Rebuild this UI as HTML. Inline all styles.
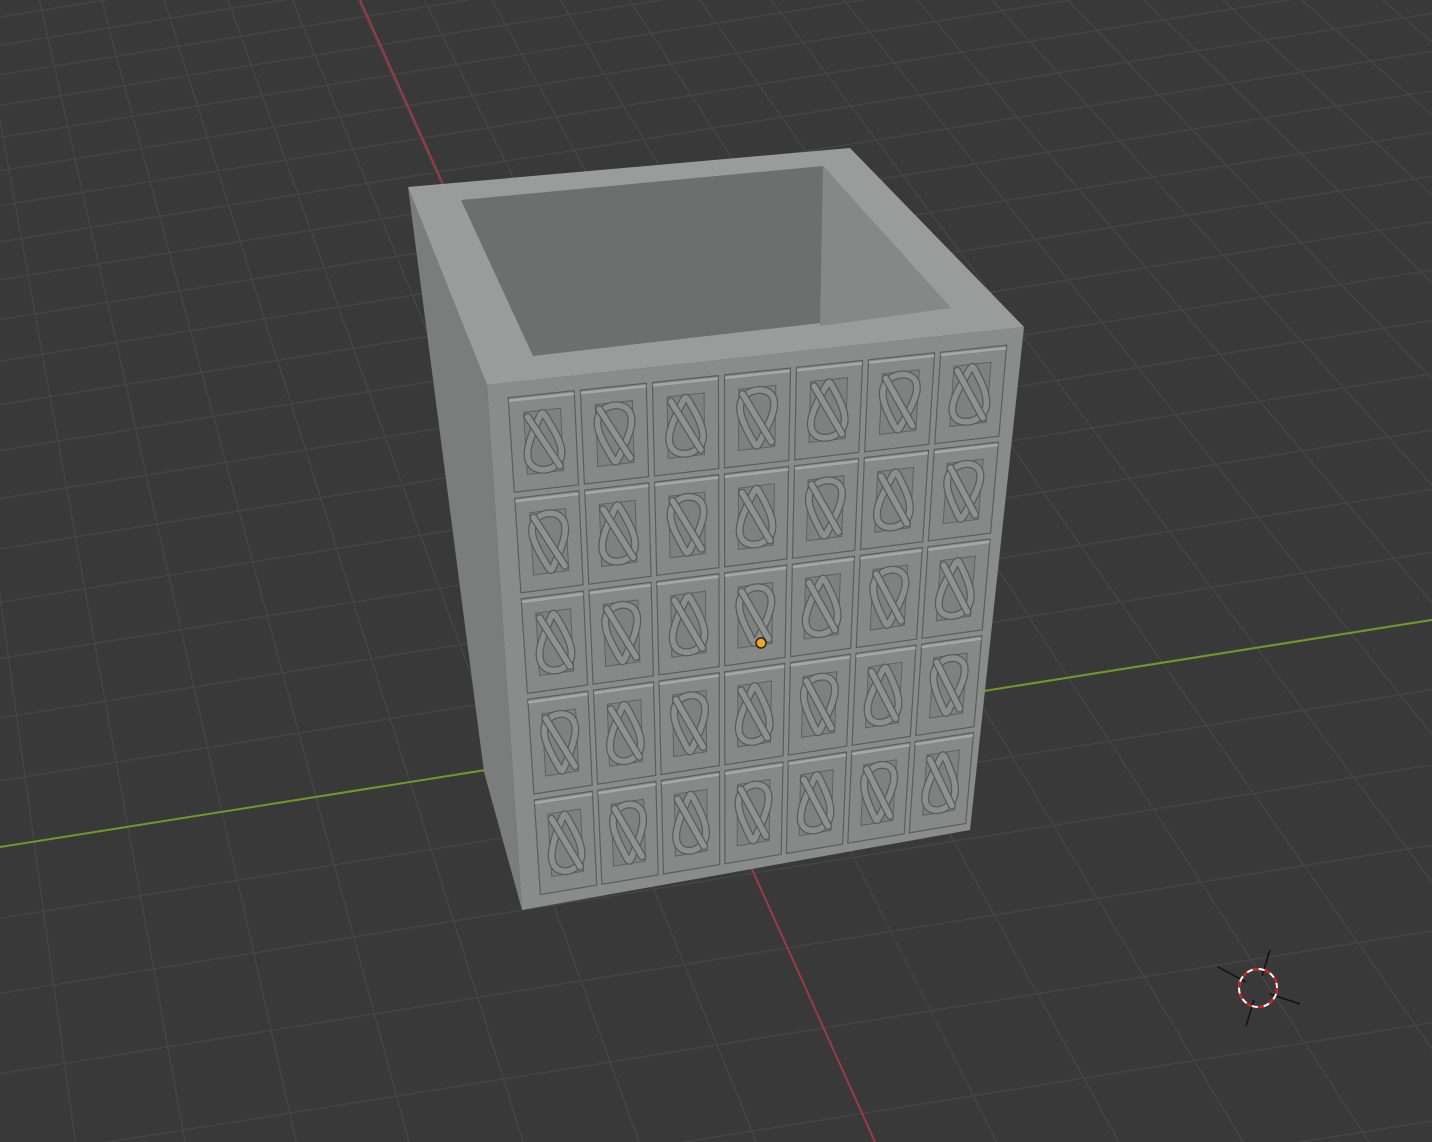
<!DOCTYPE html>
<html><head><meta charset="utf-8"><style>
html,body{margin:0;padding:0;background:#393939;overflow:hidden;width:1432px;height:1142px}
svg{display:block}
</style></head><body>
<svg id="s" width="1432" height="1142" viewBox="0 0 1432 1142" xmlns="http://www.w3.org/2000/svg">
<rect width="1432" height="1142" fill="#393939"/>
<g id="grid" stroke="#474747" stroke-width="1.2"></g>
<line x1="360" y1="0" x2="875" y2="1142" stroke="#9a3a48" stroke-width="2"/>
<line x1="0" y1="847" x2="1432" y2="620" stroke="#6e9a2a" stroke-width="2"/>
<polygon points="408,187 487,385 522,910 484,772" fill="#7b7d7c"/>
<polygon points="487,385 1024,327 970,830 522,910" fill="#8a8c8b"/>
<polygon points="408,187 850,148 1024,327 487,385" fill="#9a9c9b"/>
<polygon points="461,200 823,166 951,308 533,356" fill="#6d6f6e"/>
<polygon points="823,166 951,308 820,326" fill="#868887"/>
<g id="tiles"></g>
<circle cx="761" cy="643" r="5" fill="#f5a623" stroke="#222" stroke-width="1.5"/>
<g transform="translate(1258,988)">
<line x1="-40" y1="-21" x2="-12" y2="-6" stroke="#111" stroke-width="1.5"/>
<line x1="12" y1="6" x2="42" y2="16" stroke="#111" stroke-width="1.5"/>
<line x1="12" y1="-38" x2="4" y2="-12" stroke="#111" stroke-width="1.5"/>
<line x1="-4" y1="12" x2="-12" y2="38" stroke="#111" stroke-width="1.5"/>
<circle r="19" fill="none" stroke="#fff" stroke-width="2"/>
<circle r="19" fill="none" stroke="#e01010" stroke-width="2" stroke-dasharray="6 6"/>
</g>
</svg>
<script>
var NS="http://www.w3.org/2000/svg";
var g=document.getElementById('grid');
var O=[692,737],A=[-29,-64],B=[94,-15],k=0.03;
function P(u,v){var d=1+k*u;return [O[0]+(u*A[0]+v*B[0])/d,O[1]+(u*A[1]+v*B[1])/d];}
function L(a,b){var l=document.createElementNS(NS,'line');l.setAttribute('x1',a[0]);l.setAttribute('y1',a[1]);l.setAttribute('x2',b[0]);l.setAttribute('y2',b[1]);g.appendChild(l);}
for(var u=-13;u<=120;u++){L(P(u,-60),P(u,60));}
for(var v=-60;v<=60;v++){L(P(-13,v),P(400,v));}
var t=document.getElementById('tiles');
var TL=[505,395],TR=[1010,342],BR=[968,826],BL=[538,898];
function Q(s,r){var top=[TL[0]+(TR[0]-TL[0])*s,TL[1]+(TR[1]-TL[1])*s];var bot=[BL[0]+(BR[0]-BL[0])*s,BL[1]+(BR[1]-BL[1])*s];return [top[0]+(bot[0]-top[0])*r,top[1]+(bot[1]-top[1])*r];}
function ps(pts){return pts.map(function(q){return q[0].toFixed(1)+','+q[1].toFixed(1)}).join(' ');}
function poly(pts,fill,stroke,sw){var p=document.createElementNS(NS,'polygon');p.setAttribute('points',ps(pts));p.setAttribute('fill',fill);if(stroke){p.setAttribute('stroke',stroke);p.setAttribute('stroke-width',sw);}t.appendChild(p);}
function pl(pts,stroke,sw){var p=document.createElementNS(NS,'polyline');p.setAttribute('points',ps(pts));p.setAttribute('fill','none');p.setAttribute('stroke',stroke);p.setAttribute('stroke-width',sw);p.setAttribute('stroke-linecap','round');p.setAttribute('stroke-linejoin','round');t.appendChild(p);}
for(var c=0;c<7;c++)for(var r=0;r<5;r++){
 var s0=c/7+0.006,s1=(c+1)/7-0.006,r0=r/5+0.006,r1=(r+1)/5-0.006;
 poly([Q(s0,r0),Q(s1,r0),Q(s1,r1),Q(s0,r1)],'#878988','#5c5e5d',1.2);
 var a0=s0+0.2/7,a1=s1-0.2/7,b0=r0+0.16/5,b1=r1-0.16/5;
 poly([Q(a0,b0),Q(a1,b0),Q(a1,b1),Q(a0,b1)],'#7f8180','#606261',1);
 pl([Q(s0+0.003,r0+0.006),Q(s1-0.003,r0+0.006)],'#a6a8a7',2.5);
 var cx=(s0+s1)/2,cy=(r0+r1)/2,w=(s1-s0)/2,h=(r1-r0)/2;
 var e=[];for(var i=0;i<=40;i++){var an=i/40*Math.PI*2;e.push(Q(cx+Math.sin(an)*w*0.45+Math.sin(2*an)*w*0.15*((c+r)%2?1:-1),cy-Math.cos(an)*h*0.6));}
 pl(e,'#5a5c5b',8);
 pl(e,'#8d8f8e',5.5);
 var d=[Q(cx-w*0.45,cy-h*0.55),Q(cx+w*0.45,cy+h*0.55)];
 pl(d,'#5a5c5b',8);pl(d,'#909291',5.5);
}
</script>
</body></html>
